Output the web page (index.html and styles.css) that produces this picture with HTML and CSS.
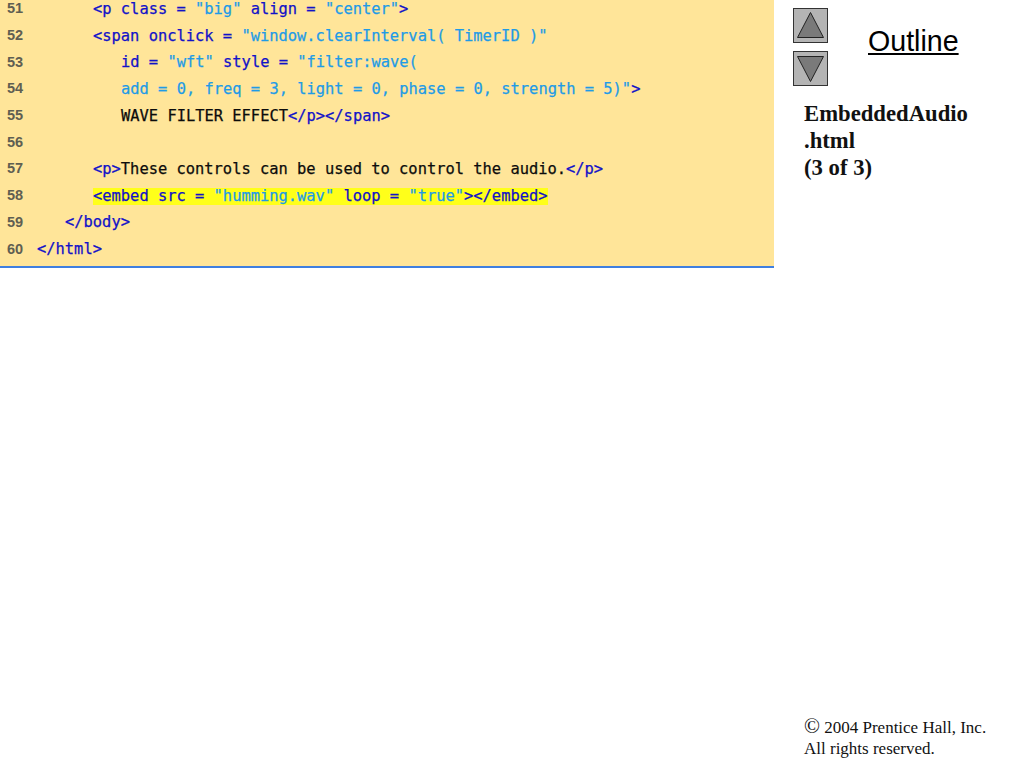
FILE: index.html
```html
<!DOCTYPE html>
<html lang="en">
<head>
<meta charset="utf-8">
<title>EmbeddedAudio.html (3 of 3)</title>
<link rel="stylesheet" href="styles.css">
</head>
<body>
<main class="slide">
  <section class="panel">
    <div class="code">
      <div class="row"><span class="num">51</span><code class="i6"><b class="t">&lt;p class = </b><b class="s">"big"</b><b class="t"> align = </b><b class="s">"center"</b><b class="t">&gt;</b></code></div>
      <div class="row"><span class="num">52</span><code class="i6"><b class="t">&lt;span onclick = </b><b class="s">"window.clearInterval( TimerID )"</b></code></div>
      <div class="row"><span class="num">53</span><code class="i9"><b class="t">id = </b><b class="s">"wft"</b><b class="t"> style = </b><b class="s">"filter:wave(</b></code></div>
      <div class="row"><span class="num">54</span><code class="i9"><b class="s">add = 0, freq = 3, light = 0, phase = 0, strength = 5)"</b><b class="t">&gt;</b></code></div>
      <div class="row"><span class="num">55</span><code class="i9"><b class="k">WAVE FILTER EFFECT</b><b class="t">&lt;/p&gt;&lt;/span&gt;</b></code></div>
      <div class="row"><span class="num">56</span><code></code></div>
      <div class="row"><span class="num">57</span><code class="i6"><b class="t">&lt;p&gt;</b><b class="k">These controls can be used to control the audio.</b><b class="t">&lt;/p&gt;</b></code></div>
      <div class="row"><span class="num">58</span><code class="i6"><span class="hl"><b class="t">&lt;embed src = </b><b class="s">"humming.wav"</b><b class="t"> loop = </b><b class="s">"true"</b><b class="t">&gt;&lt;/embed&gt;</b></span></code></div>
      <div class="row"><span class="num">59</span><code class="i3"><b class="t">&lt;/body&gt;</b></code></div>
      <div class="row"><span class="num">60</span><code><b class="t">&lt;/html&gt;</b></code></div>
    </div>
  </section>
  <aside class="side">
    <div class="head">
      <div class="arrows">
        <svg class="arrow" viewBox="0 0 35 35" width="35" height="35"><rect x=".5" y=".5" width="34" height="34" fill="#b4b4b4" stroke="#333"/><path d="M17.5 4.5 30.5 29.5H4.5Z" fill="#7a7a7a" stroke="#222"/></svg>
        <svg class="arrow" viewBox="0 0 35 35" width="35" height="35"><rect x=".5" y=".5" width="34" height="34" fill="#b4b4b4" stroke="#333"/><path d="M17.5 30.5 30.5 5.5H4.5Z" fill="#7a7a7a" stroke="#222"/></svg>
      </div>
      <h2 class="outline">Outline</h2>
    </div>
    <h1 class="title">EmbeddedAudio<br>.html<br>(3 of 3)</h1>
    <p class="copy"><span class="mark">©</span> 2004 Prentice Hall, Inc.<br>All rights reserved.</p>
  </aside>
</main>
</body>
</html>
```
FILE: styles.css
```css
html, body { margin: 0; padding: 0; background: #fff; }
.slide { display: flex; width: 1024px; height: 768px; overflow: hidden; }
.panel { width: 774px; height: 268px; flex: none; box-sizing: border-box; background: #ffe599; border-bottom: 2px solid #3f7fe0; overflow: hidden; }
.code { margin-top: -5px; }
.row { display: flex; height: 26.7px; align-items: center; }
.num { width: 37px; flex: none; box-sizing: border-box; padding-left: 7px; font: bold 14.5px "Liberation Sans", sans-serif; color: #5f5f52; }
code { display: block; white-space: pre; font: 15.42px/17px "DejaVu Sans Mono", monospace; position: relative; top: 1px; }
code b { font-weight: 400; -webkit-text-stroke: 0.25px currentColor; }
.i3 { padding-left: 28px; }
.i6 { padding-left: 56px; }
.i9 { padding-left: 84px; }
.t { color: #1212c8; }
.s { color: #1e9be6; }
.k { color: #0c0c0c; }
.hl { display: inline-block; background: #ffff1a; }
.side { flex: 1; display: flex; flex-direction: column; padding: 8px 0 9px 19px; color: #111; }
.head { display: flex; }
.arrows { display: flex; flex-direction: column; gap: 8px; }
.arrow { display: block; }
.outline { margin: 16px 0 0 40px; font: 400 28.6px/34px "Liberation Sans", sans-serif; text-decoration: underline; color: #000; }
.title { margin: 14px 0 0 11px; font: bold 22.7px/27px "Liberation Serif", serif; color: #111; }
.copy { margin: auto 0 0 11px; font: 17px/21px "Liberation Serif", serif; color: #111; }
.mark { font-size: 21px; line-height: 18px; }
```
